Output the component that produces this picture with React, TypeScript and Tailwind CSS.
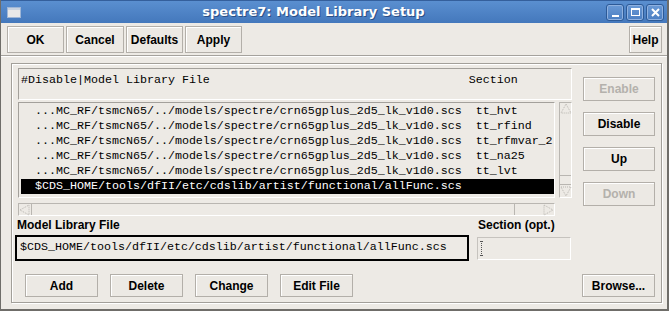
import React from 'react'

const rows = [
  { file: '...MC_RF/tsmcN65/../models/spectre/crn65gplus_2d5_lk_v1d0.scs', section: 'tt_hvt' },
  { file: '...MC_RF/tsmcN65/../models/spectre/crn65gplus_2d5_lk_v1d0.scs', section: 'tt_rfind' },
  { file: '...MC_RF/tsmcN65/../models/spectre/crn65gplus_2d5_lk_v1d0.scs', section: 'tt_rfmvar_2' },
  { file: '...MC_RF/tsmcN65/../models/spectre/crn65gplus_2d5_lk_v1d0.scs', section: 'tt_na25' },
  { file: '...MC_RF/tsmcN65/../models/spectre/crn65gplus_2d5_lk_v1d0.scs', section: 'tt_lvt' },
  { file: '$CDS_HOME/tools/dfII/etc/cdslib/artist/functional/allFunc.scs', section: '', selected: true },
]

const mono = "font-['Liberation_Mono',monospace] text-[11.67px]"

function Btn({ label, w, h = 'h-[27px]', disabled = false }: { label: string; w: string; h?: string; disabled?: boolean }) {
  return (
    <div
      className={`${w} ${h} flex items-center justify-center border border-[#b3afa9] bg-[#ece9e4] shadow-[inset_1px_1px_0_#fff] font-['Liberation_Sans',sans-serif] text-[12px] font-bold ${
        disabled ? 'text-[#b4b1ac]' : 'text-black'
      }`}
    >
      {label}
    </div>
  )
}

function Arrow({ dir }: { dir: 'up' | 'down' | 'left' | 'right' }) {
  const pts = {
    up: '6,1 11,10 1,10',
    down: '1,2 11,2 6,11',
    left: '1,6 10,1 10,11',
    right: '2,1 11,6 2,11',
  }[dir]
  return (
    <svg width="12" height="12" viewBox="0 0 12 12" className="block shrink-0">
      <polygon points={pts} fill="none" stroke="#b9b6b1" strokeWidth="1" strokeDasharray="1 1" />
    </svg>
  )
}

export default function App() {
  return (
    <div className="w-[669px] h-[311px] bg-[#edeae5] border-l border-r-2 border-b-2 border-[#6f6d69] flex flex-col overflow-hidden">
      {/* title bar */}
      <div className="h-[23px] shrink-0 bg-gradient-to-b from-[#5a8fd0] to-[#4478bc] border-t border-[#345f9c] flex items-center">
        <div className="ml-[6px] w-[14px] h-[11px] bg-[#e8e8e8] border border-[#9fb6d6] shadow-[inset_0_2px_0_#c9d3e0]" />
        <div className="flex-1 text-center font-['DejaVu_Sans',sans-serif] text-[13px] font-bold text-white [text-shadow:1px_1px_0_#2a4f86]">
          spectre7: Model Library Setup
        </div>
        <div className="flex gap-[2px] mr-[3px]">
          {['min', 'max', 'close'].map((k) => (
            <div
              key={k}
              className="w-[18px] h-[17px] rounded-[3px] border border-[#2d5a97] bg-gradient-to-b from-[#6b9ad6] to-[#4a7ec2] shadow-[inset_0_0_0_1px_#8fb1e0] flex items-center justify-center"
            >
              {k === 'min' && <div className="w-[7px] h-[2px] bg-white mt-[7px]" />}
              {k === 'max' && <div className="w-[9px] h-[8px] border border-white border-t-2" />}
              {k === 'close' && (
                <svg width="9" height="9" viewBox="0 0 9 9">
                  <path d="M1 1 L8 8 M8 1 L1 8" stroke="white" strokeWidth="2" />
                </svg>
              )}
            </div>
          ))}
        </div>
      </div>

      {/* toolbar */}
      <div className="flex items-center pt-[3px] pl-[6px] pr-[5px]">
        <div className="flex gap-[2px]">
          <Btn label="OK" w="w-[57px]" />
          <Btn label="Cancel" w="w-[58px]" />
          <Btn label="Defaults" w="w-[57px]" />
          <Btn label="Apply" w="w-[57px]" />
        </div>
        <div className="ml-auto">
          <Btn label="Help" w="w-[33px]" />
        </div>
      </div>
      <div className="mt-[2px] h-[2px] border-t border-[#a5a29d] border-b border-b-white" />

      {/* group frame */}
      <div className="mt-[6px] ml-[10px] mr-[5px] h-[240px] border border-[#a29f99] shadow-[inset_1px_1px_0_#fff,1px_1px_0_#fff] flex flex-col p-[1px]">
        <div className="flex">
          {/* left: list */}
          <div className="ml-[5px] mt-[3px] w-[554px] flex flex-col">
            <div className={`h-[32px] border border-[#a3a09b] border-r-white border-b-white ${mono} leading-[15px] pl-[2px] pt-[4px] whitespace-pre text-black`}>
              {'#Disable|Model Library File'.padEnd(64, ' ') + 'Section'}
            </div>
            <div className="mt-[2px] flex h-[96px]">
              <div className="w-[537px] border border-[#a3a09b] border-r-white border-b-white pl-[2px] pt-[1px] overflow-hidden">
                {rows.map((r, i) => (
                  <div
                    key={i}
                    className={`h-[15px] ${mono} leading-[15px] whitespace-pre ${
                      r.selected ? 'bg-black text-white' : 'text-black'
                    }`}
                  >
                    {'  ' + r.file + (r.section ? '  ' + r.section : '')}
                  </div>
                ))}
              </div>
              <div className="ml-[4px] w-[13px] border border-[#b9b6b1] border-r-white border-b-white flex flex-col">
                <Arrow dir="up" />
                <div className="flex-1" />
                <div className="h-[10px] border-t border-b border-[#b9b6b1]" />
                <Arrow dir="down" />
              </div>
            </div>
            <div className="mt-[5px] w-[537px] h-[13px] shrink-0 border border-[#b9b6b1] border-r-white border-b-white flex items-center">
              <Arrow dir="left" />
              <div className="h-[11px] w-[484px] border-l border-r border-[#b9b6b1]" />
              <div className="flex-1" />
              <Arrow dir="right" />
            </div>
          </div>
          {/* right: action buttons */}
          <div className="ml-[11px] pt-[12px] flex flex-col gap-[11px]">
            <Btn label="Enable" w="w-[72px]" h="h-[24px]" disabled />
            <Btn label="Disable" w="w-[72px]" h="h-[24px]" />
            <Btn label="Up" w="w-[72px]" h="h-[24px]" />
            <Btn label="Down" w="w-[72px]" h="h-[24px]" disabled />
          </div>
        </div>

        {/* inputs */}
        <div className="flex mt-[2px]">
          <div className="ml-[2px] w-[454px] flex flex-col">
            <div className="pl-[2px] font-['Liberation_Sans',sans-serif] text-[12px] font-bold leading-[15px] text-black">
              Model Library File
            </div>
            <div className={`mt-[2px] h-[26px] border-2 border-black flex items-center pl-[3px] ${mono} text-black whitespace-pre`}>
              $CDS_HOME/tools/dfII/etc/cdslib/artist/functional/allFunc.scs
            </div>
          </div>
          <div className="ml-[8px] w-[94px] flex flex-col">
            <div className="pl-[1px] font-['Liberation_Sans',sans-serif] text-[12px] font-bold leading-[15px] text-black">
              Section (opt.)
            </div>
            <div className="mt-[4px] h-[23px] border border-[#c6c3be] border-r-white border-b-white flex items-center pl-[2px]">
              <div className="h-[15px] w-[3px] border-l border-dotted border-[#555] ml-[1px] relative">
                <div className="absolute -left-[2px] top-0 w-[3px] border-t border-dotted border-[#555]" />
                <div className="absolute -left-[2px] bottom-0 w-[3px] border-t border-dotted border-[#555]" />
              </div>
            </div>
          </div>
        </div>

        {/* bottom buttons */}
        <div className="flex mt-[13px] pl-[12px] pr-[5px]">
          <div className="flex gap-[12px]">
            <Btn label="Add" w="w-[73px]" h="h-[23px]" />
            <Btn label="Delete" w="w-[73px]" h="h-[23px]" />
            <Btn label="Change" w="w-[73px]" h="h-[23px]" />
            <Btn label="Edit File" w="w-[73px]" h="h-[23px]" />
          </div>
          <div className="ml-auto">
            <Btn label="Browse..." w="w-[73px]" h="h-[23px]" />
          </div>
        </div>
      </div>
    </div>
  )
}
